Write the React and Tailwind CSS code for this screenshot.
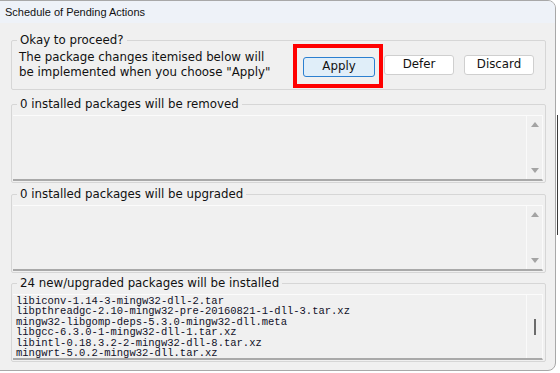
import React from 'react';

const ui = { fontFamily: '"DejaVu Sans", Tahoma, sans-serif' };
const mono = { fontFamily: '"Liberation Mono", "DejaVu Sans Mono", monospace' };

const installed = [
  'libiconv-1.14-3-mingw32-dll-2.tar',
  'libpthreadgc-2.10-mingw32-pre-20160821-1-dll-3.tar.xz',
  'mingw32-libgomp-deps-5.3.0-mingw32-dll.meta',
  'libgcc-6.3.0-1-mingw32-dll-1.tar.xz',
  'libintl-0.18.3.2-2-mingw32-dll-8.tar.xz',
  'mingwrt-5.0.2-mingw32-dll.tar.xz',
];

// little grey scroll arrows of the old tk listbox
const Arrow = ({ down }) => (
  <svg width="8" height="5" viewBox="0 0 8 5">
    <path d={down ? 'M0 0 H8 L4 5 Z' : 'M0 5 H8 L4 0 Z'} fill="#a3a3a3" />
  </svg>
);

const ListBox = ({ children, thumb }) => (
  <div className="flex h-[66px] mt-[4px] ml-[1px] mr-[2px] border-t border-t-[#fbfbfb] border-b-2 border-b-[#a9a9a9] border-r border-r-[#fafafa] bg-[#f0f0f0]">
    <div className="flex-1 pl-[3px] pt-[1px] overflow-hidden">{children}</div>
    <div className="w-[16px] border-l border-l-[#fafafa] flex flex-col items-center justify-between py-[6px]">
      {thumb ? (
        <div className="flex-1 flex items-center">
          <div className="w-[2px] h-[16px] bg-[#6b6b6b] ml-[1px]" />
        </div>
      ) : (
        <>
          <Arrow />
          <Arrow down />
        </>
      )}
    </div>
  </div>
);

const Group = ({ label, children, className }) => (
  <fieldset className={`border border-[#d6d6d6] rounded-[2px] px-0 pb-[1px] ${className}`}>
    <legend className="ml-[5px] px-[3px] text-[11.8px] leading-[14px] text-[#111]">{label}</legend>
    {children}
  </fieldset>
);

const Btn = ({ children, primary }) => (
  <button
    className={`h-[20px] rounded-[3px] text-[11.8px] leading-none text-[#111] border ${
      primary ? 'w-[72px] bg-[#e0eef9] border-[#2b7fd0]' : 'w-[70px] bg-white border-[#cfcfcf]'
    }`}
  >
    {children}
  </button>
);

export default function App() {
  return (
    <div className="w-[560px] h-[373px] bg-white overflow-hidden flex" style={ui}>
      <div className="w-[557px] h-[371px] -ml-[1px] border border-[#a8a8a8] rounded-r-[8px] bg-[#f0f0f0] flex flex-col overflow-hidden shrink-0">
        <div
          className="h-[22px] bg-[#eef2f8] flex items-center pl-[5px] text-[11px] text-[#111]"
          style={{ fontFamily: '"Liberation Sans", Arial, sans-serif' }}
        >
          Schedule of Pending Actions
        </div>

        <div className="flex flex-col pl-[11px] pr-[9px] pt-[10px]">
          <Group label="Okay to proceed?" className="h-[57px]">
            <div className="flex items-start mt-[3px]">
              <div className="pl-[7px] text-[11.8px] leading-[15px] text-[#111] w-[291px] whitespace-nowrap">
                The package changes itemised below will
                <br />
                be implemented when you choose "Apply"
              </div>
              <div className="flex items-center gap-[9px] pt-[3px]">
                <div className="border-[4px] border-[#ff0000] pl-[6px] pr-[4px] pt-[5px] pb-[7px] -ml-[10px] -mr-[8px] -mt-[9px] -mb-[11px]">
                  <Btn primary>Apply</Btn>
                </div>
                <div className="flex gap-[10px]">
                  <Btn>Defer</Btn>
                  <Btn>Discard</Btn>
                </div>
              </div>
            </div>
          </Group>

          <Group label="0 installed packages will be removed" className="mt-[7px]">
            <ListBox />
          </Group>

          <Group label="0 installed packages will be upgraded" className="mt-[4px]">
            <ListBox />
          </Group>

          <Group label="24 new/upgraded packages will be installed" className="mt-[3px]">
            <ListBox thumb>
              <div className="text-[10.5px] leading-[10.4px] text-[#101028]" style={mono}>
                {installed.map((p) => (
                  <div key={p} className="whitespace-nowrap">{p}</div>
                ))}
              </div>
            </ListBox>
          </Group>
        </div>
      </div>
      <div className="w-[1px] h-[120px] mt-[115px] ml-[1px] bg-[#3a3a3a]" />
    </div>
  );
}
